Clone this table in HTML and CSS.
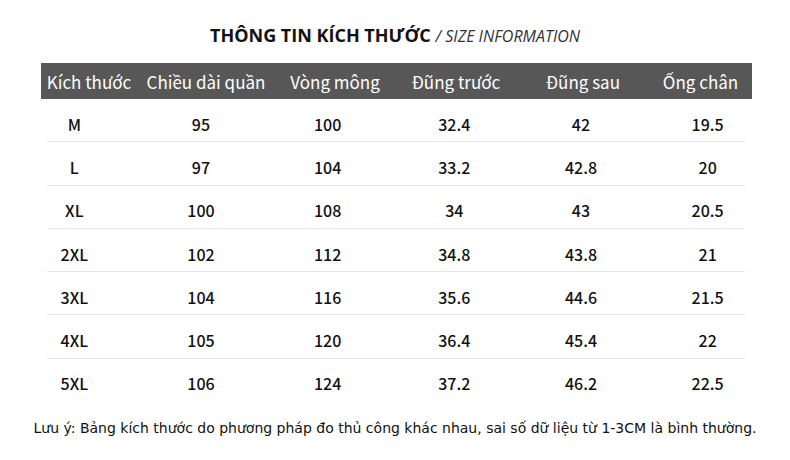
FILE: index.html
```html
<!DOCTYPE html>
<html lang="vi">
<head>
<meta charset="utf-8">
<title>Size information</title>
<link rel="stylesheet" href="styles.css">
</head>
<body>
<div class="page">
  <h1 class="title"><span class="title-main">THÔNG TIN KÍCH THƯỚC</span> <span class="title-sub">/ SIZE INFORMATION</span></h1>
  <div class="thead">
    <div>Kích thước</div>
    <div>Chiều dài quần</div>
    <div>Vòng mông</div>
    <div>Đũng trước</div>
    <div>Đũng sau</div>
    <div>Ống chân</div>
  </div>
  <div class="tbody">
    <div class="row"><div class="size">M</div><div>95</div><div>100</div><div>32.4</div><div>42</div><div>19.5</div></div>
    <div class="row"><div class="size">L</div><div>97</div><div>104</div><div>33.2</div><div>42.8</div><div>20</div></div>
    <div class="row"><div class="size">XL</div><div>100</div><div>108</div><div>34</div><div>43</div><div>20.5</div></div>
    <div class="row"><div class="size">2XL</div><div>102</div><div>112</div><div>34.8</div><div>43.8</div><div>21</div></div>
    <div class="row"><div class="size">3XL</div><div>104</div><div>116</div><div>35.6</div><div>44.6</div><div>21.5</div></div>
    <div class="row"><div class="size">4XL</div><div>105</div><div>120</div><div>36.4</div><div>45.4</div><div>22</div></div>
    <div class="row last"><div class="size">5XL</div><div>106</div><div>124</div><div>37.2</div><div>46.2</div><div>22.5</div></div>
  </div>
  <p class="note">Lưu ý: Bảng kích thước do phương pháp đo thủ công khác nhau, sai số dữ liệu từ 1-3CM là bình thường.</p>
</div>
</body>
</html>
```

FILE: styles.css
```css
html, body {
  margin: 0;
  padding: 0;
  background: #ffffff;
}

.page {
  width: 790px;
  height: 460px;
  overflow: hidden;
  color: #111111;
  font-family: "Noto Sans CJK SC", "Noto Sans", sans-serif;
}

.title {
  margin: 0;
  padding-top: 22px;
  height: 26px;
  line-height: 26px;
  text-align: center;
  font-family: "Open Sans", "Noto Sans", sans-serif;
  font-size: 18px;
  font-weight: normal;
}

.title-main {
  font-weight: 700;
  font-size: 18px;
  color: #111111;
}

.title-sub {
  font-style: italic;
  font-weight: 400;
  font-size: 16px;
  color: #333333;
}

.thead {
  margin: 15px 0 0 41px;
  width: 711px;
  height: 36px;
  background: #575757;
  color: #ffffff;
  display: grid;
  grid-template-columns: 96px 138px 120px 122px 132px 103px;
  align-items: center;
  font-size: 17px;
  font-weight: 400;
}

.thead > div {
  text-align: center;
  white-space: nowrap;
  padding-top: 1px;
}

.tbody {
  margin-left: 11px;
  width: 760px;
}

.row {
  height: 43.3px;
  display: grid;
  grid-template-columns: repeat(6, 1fr);
  align-items: center;
  font-size: 16px;
  font-weight: 500;
  background: linear-gradient(#e6e6e6, #e6e6e6) 36px 100% / 698px 1px no-repeat;
}

.row.last {
  background: none;
}

.row > div {
  text-align: center;
  padding-top: 6px;
}

.note {
  margin: 16px 0 0 0;
  line-height: 20px;
  text-align: center;
  font-family: "DejaVu Sans", sans-serif;
  font-size: 14px;
  color: #111111;
}
```
